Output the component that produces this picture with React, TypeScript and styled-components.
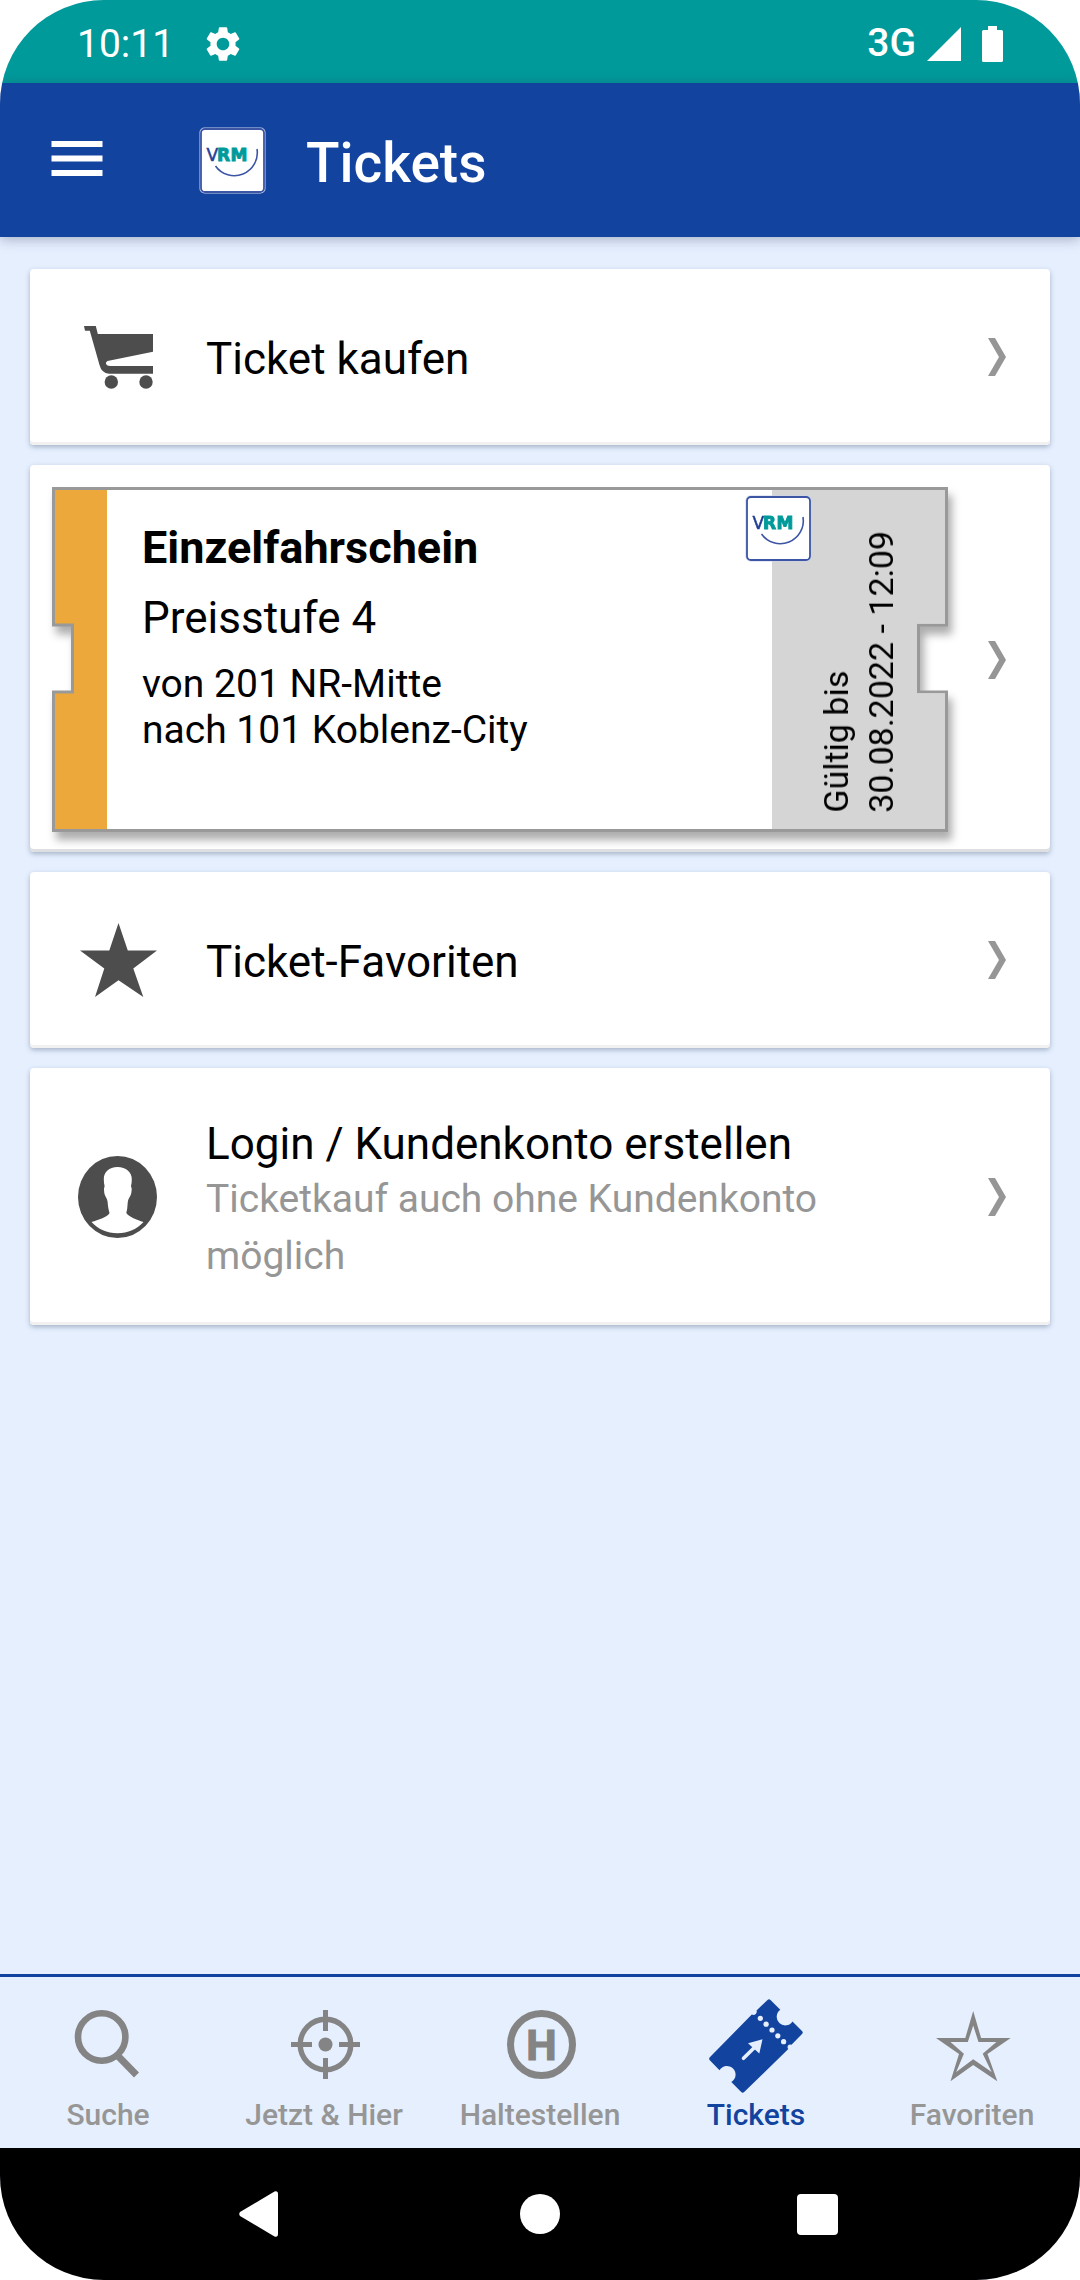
import React from "react";
import styled, { createGlobalStyle } from "styled-components";

const color = {
  teal: "#009a9a",
  blue: "#12449f",
  page: "#e5effe",
  card: "#ffffff",
  ink: "#000000",
  muted: "#969696",
  navIcon: "#848484",
  icon: "#4d4d4d",
  outline: "#999999",
  orange: "#eca83b",
  stub: "#d5d5d5",
};

const GlobalStyle = createGlobalStyle`
  *, *::before, *::after { box-sizing: border-box; }
  body {
    margin: 0;
    background: #ffffff;
    color: ${color.ink};
    font-family: Roboto, "Noto Sans", sans-serif;
  }
  svg { display: block; flex: none; }
`;

const Screen = styled.div`
  display: flex;
  flex-direction: column;
  min-height: 100vh;
  overflow: hidden;
  border-radius: 104px;
  background: ${color.page};
`;

const StatusBar = styled.div`
  display: flex;
  align-items: center;
  justify-content: space-between;
  height: 83px;
  padding: 4px 77px 0 77px;
  background: ${color.teal};
  color: #ffffff;
  font-size: 39px;
  line-height: 46px;
`;

const StatusGroup = styled.div<{ $gap: number }>`
  display: flex;
  align-items: center;
  gap: ${(p) => p.$gap}px;
`;

const Network = styled.span`
  padding-bottom: 2px;
  font-weight: 500;
`;

const SignalIcons = styled.div`
  display: flex;
  align-items: center;
  gap: 21px;
`;

const AppBar = styled.header`
  position: relative;
  display: flex;
  align-items: center;
  height: 154px;
  padding: 0 51px;
  background: ${color.blue};
  color: #ffffff;
  box-shadow: 0 2px 12px rgba(40, 50, 90, 0.35);
`;

const IconButton = styled.button`
  display: flex;
  align-items: center;
  justify-content: center;
  padding: 0;
  border: 0;
  background: none;
  color: inherit;
  cursor: pointer;
`;

const Brand = styled.div`
  display: flex;
  align-items: center;
  gap: 40px;
  margin-left: 96px;
`;

const Title = styled.h1`
  margin: 0;
  padding-top: 6px;
  font-size: 55px;
  font-weight: 500;
  line-height: 64px;
`;

const List = styled.main`
  display: flex;
  flex: 1;
  flex-direction: column;
  gap: 20px;
  padding: 32px 30px;
`;

const Card = styled.a<{ $line: string }>`
  display: flex;
  align-items: center;
  min-height: 176px;
  border-radius: 4px;
  background: ${color.card};
  color: inherit;
  text-decoration: none;
  box-shadow:
    inset 0 -3px 0 ${(p) => p.$line},
    0 2px 5px rgba(70, 90, 120, 0.4);
`;

const ActionCard = styled(Card)`
  padding: 40px 0;
`;

const TicketCard = styled(Card)`
  padding: 22px 0 20px 22px;
`;

const CardIcon = styled.span`
  display: flex;
  flex: none;
  justify-content: center;
  width: 176px;
`;

const CardText = styled.span<{ $twoLevels: boolean }>`
  flex: 1;
  padding-top: ${(p) => (p.$twoLevels ? 9 : 4)}px;
`;

const CardTitle = styled.span`
  display: block;
  font-size: 44px;
  line-height: 54px;
`;

const CardDetail = styled.span`
  display: block;
  color: ${color.muted};
  font-size: 39px;
  line-height: 57px;
`;

const ChevronSlot = styled.span`
  display: flex;
  flex: none;
  justify-content: flex-end;
  width: 102px;
  padding-right: 44px;
`;

const TicketShadow = styled.div`
  flex: 1;
  filter: drop-shadow(4px 8px 4px rgba(0, 0, 0, 0.32));
`;

/* Rectangle with a notch in the middle of both short sides. */
const notched = (left: number, right: number, up: number, down: number) => `
  clip-path: polygon(
    0 0, 100% 0,
    100% calc(50% - ${up}px),
    calc(100% - ${right}px) calc(50% - ${up}px),
    calc(100% - ${right}px) calc(50% + ${down}px),
    100% calc(50% + ${down}px),
    100% 100%, 0 100%,
    0 calc(50% + ${down}px),
    ${left}px calc(50% + ${down}px),
    ${left}px calc(50% - ${up}px),
    0 calc(50% - ${up}px)
  );
`;

const TicketOutline = styled.div`
  padding: 3px;
  background: ${color.outline};
  ${notched(19, 28, 33, 31)}
`;

const TicketBody = styled.div`
  display: flex;
  min-height: 339px;
  background: linear-gradient(to right, ${color.orange} 52px, ${color.card} 52px);
  ${notched(19, 28, 36, 34)}
`;

const TicketInfo = styled.div`
  display: flex;
  flex: 1;
  flex-direction: column;
  gap: 16px;
  padding: 31px 0 31px 87px;
  font-size: 44px;
  line-height: 54px;
`;

const TicketName = styled.strong`
  font-size: 45px;
  font-weight: 700;
`;

const TicketRoute = styled.span`
  font-size: 39px;
  line-height: 46px;
`;

const TicketStub = styled.div`
  position: relative;
  display: flex;
  align-items: flex-end;
  justify-content: flex-end;
  width: 173px;
  padding: 0 41px 16px 0;
  background: ${color.stub};
`;

const StubLogo = styled.span`
  position: absolute;
  top: 5px;
  left: -27px;
`;

const Validity = styled.span`
  writing-mode: vertical-rl;
  transform: rotate(180deg);
  font-size: 34px;
  line-height: 45px;
  white-space: nowrap;
`;

const TabBar = styled.nav`
  display: grid;
  grid-template-columns: repeat(5, 1fr);
  border-top: 3px solid ${color.blue};
  background: ${color.page};
`;

const Tab = styled.a<{ $active?: boolean }>`
  display: flex;
  flex-direction: column;
  align-items: center;
  padding: 22px 0 13px;
  color: ${(p) => (p.$active ? color.blue : color.muted)};
  font-size: 30px;
  font-weight: 500;
  line-height: 40px;
  text-decoration: none;

  svg {
    color: ${(p) => (p.$active ? color.blue : color.navIcon)};
  }
`;

const SystemBar = styled.div`
  display: grid;
  grid-template-columns: repeat(3, 277px);
  justify-content: center;
  height: 132px;
  background: #000000;
  color: #ffffff;
`;

const Logo = () => (
  <svg width="67" height="67" viewBox="0 0 67 67" role="img" aria-label="VRM">
    <rect x="0.5" y="0.5" width="66" height="66" rx="5" fill="#c9d3ea" />
    <rect x="2" y="2" width="63" height="63" rx="4" fill="#fff" stroke="#3c55a5" strokeWidth="1.8" />
    <text x="7.5" y="33.5" fontFamily="DejaVu Sans, sans-serif" fontSize="17" fill="#1f3f96" stroke="#1f3f96" strokeWidth="0.5">
      V
    </text>
    <g fontFamily="DejaVu Sans, sans-serif" fontSize="17" fontWeight="700" fill="#009a9a" stroke="#009a9a" strokeWidth="0.9">
      <text x="18" y="33.5">R</text>
      <text x="31.5" y="33.5">M</text>
    </g>
    <path d="M58 22A23 23 0 0 1 16.5 39" fill="none" stroke="#3c55a5" strokeWidth="1.6" />
  </svg>
);

const Gear = () => (
  <svg width="42" height="42" viewBox="0 0 24 24" fill="currentColor">
    <path d="M19.14 12.94c.04-.3.06-.61.06-.94 0-.32-.02-.64-.07-.94l2.03-1.58a.49.49 0 0 0 .12-.61l-1.92-3.32a.488.488 0 0 0-.59-.22l-2.39.96c-.5-.38-1.03-.7-1.62-.94l-.36-2.54a.484.484 0 0 0-.48-.41h-3.84c-.24 0-.43.17-.47.41l-.36 2.54c-.59.24-1.13.57-1.62.94l-2.39-.96c-.22-.08-.47 0-.59.22L2.74 8.87c-.12.21-.08.47.12.61l2.03 1.58c-.05.3-.09.63-.09.94s.02.64.07.94l-2.03 1.58a.49.49 0 0 0-.12.61l1.92 3.32c.12.22.37.29.59.22l2.39-.96c.5.38 1.03.7 1.62.94l.36 2.54c.05.24.24.41.48.41h3.84c.24 0 .44-.17.47-.41l.36-2.54c.59-.24 1.13-.56 1.62-.94l2.39.96c.22.08.47 0 .59-.22l1.92-3.32c.12-.22.07-.47-.12-.61l-2.01-1.58zM12 15.6c-1.98 0-3.6-1.62-3.6-3.6s1.62-3.6 3.6-3.6 3.6 1.62 3.6 3.6-1.62 3.6-3.6 3.6z" />
  </svg>
);

const Signal = () => (
  <svg width="34" height="36" viewBox="0 0 34 36" fill="currentColor">
    <path d="M34 1V35H0Z" />
  </svg>
);

const Battery = () => (
  <svg width="21" height="36" viewBox="0 0 21 36" fill="currentColor">
    <path d="M6 0h9v4h4.5q1.5 0 1.5 1.5v29q0 1.500-1.500 1.500h-18Q0 36 0 34.500v-29Q0 4 1.500 4H6Z" />
  </svg>
);

const Burger = () => (
  <svg width="52" height="38" viewBox="0 0 52 38" fill="currentColor">
    <path d="M0.500 0h51v6h-51zM0.500 14.500h51v6h-51zM0.500 29h51v6h-51z" />
  </svg>
);

const Chevron = () => (
  <svg width="18" height="38" viewBox="0 0 18 38" fill="#969696">
    <path d="M0 0h7l11 19-11 19H0l11-19z" />
  </svg>
);

const Cart = () => (
  <svg width="69" height="63" viewBox="0 0 69 63" fill={color.icon}>
    <path d="M0 0H11.800L13.800 8H69V25.700L23.500 35Q21.500 36 22 38Q23 40 26 40H69V47.700H25Q17.500 47 15.500 39L5.800 4.700H1Z" />
    <circle cx="27.3" cy="56" r="6.7" />
    <circle cx="62" cy="56" r="6.7" />
  </svg>
);

const StarFilled = () => (
  <svg width="77" height="75" viewBox="0 0 77 75" fill={color.icon}>
    <path d="M38.500 0L47.800 27.500H77L53.300 45.500L63.300 74L38.500 57.200L15 74L24.300 45.500L0 27.500H29.300Z" />
  </svg>
);

const Person = () => (
  <svg width="81" height="82" viewBox="0 0 81 82">
    <ellipse cx="39.5" cy="41" rx="39.5" ry="41" fill={color.icon} />
    <path
      fill="#fff"
      d="M39.500 11C31 11 25.800 16 25.800 23Q25.800 27 26.600 30Q25.300 33 26.300 37C27 41 29.300 42 29.600 46C30 51 30.500 53 31.500 57C30 61 20 64 13.500 66C20 73 29 77.300 39.500 77.300S59 73 65.500 66C59 64 51 61 48.300 57C49.500 53 49.300 51 49.800 46C50.300 42 52.500 41 53.300 37Q54.500 33 53 30Q53.800 27 53.800 23C53.800 16 48 11 39.500 11Z"
    />
  </svg>
);

const TabIcon = ({ children }: { children: React.ReactNode }) => (
  <svg width="96" height="96" viewBox="0 0 96 96" fill="none" stroke="none" aria-hidden="true">
    {children}
  </svg>
);

const SearchIcon = () => (
  <TabIcon>
    <circle cx="41.7" cy="38" r="23.7" stroke="currentColor" strokeWidth="6.6" />
    <path d="M57.500 56.500L76.500 76" stroke="currentColor" strokeWidth="7" />
  </TabIcon>
);

const TargetIcon = () => (
  <TabIcon>
    <circle cx="49.5" cy="45.5" r="25.3" stroke="currentColor" strokeWidth="5.4" />
    <circle cx="49.5" cy="45.5" r="7" fill="currentColor" />
    <path d="M49.500 11V32M49.500 59V80M15 45.500H36M63 45.500H84" stroke="currentColor" strokeWidth="5" />
  </TabIcon>
);

const StopIcon = () => (
  <TabIcon>
    <circle cx="49.5" cy="45.5" r="31" stroke="currentColor" strokeWidth="7" />
    <text
      x="49.5"
      y="61"
      textAnchor="middle"
      fontFamily="Roboto, sans-serif"
      fontSize="43"
      fontWeight="700"
      fill="currentColor"
      stroke="currentColor"
      strokeWidth="1.2"
    >
      H
    </text>
  </TabIcon>
);

const TicketIcon = () => (
  <TabIcon>
    <path
      fill="currentColor"
      d="M59.500 1Q61 -0.500 62.500 1L72.300 10.800A8.600 8.600 0 1 0 84.500 22.500L94 32Q95.500 33.500 94 35L83.500 45.800Q81.500 44.800 80 46.500Q79 48.500 80.300 50L36.200 93Q34.700 94.500 33.200 93L23.300 83A8.600 8.600 0 1 0 11.500 71.300L1.800 61.300Q0.500 59.800 1.800 58.300L43.800 15.500Q46 16.500 47.800 15Q49.300 13 48.500 11.500Z"
    />
    <g fill={color.page}>
      <circle cx="52.3" cy="19.3" r="2.6" />
      <circle cx="58.1" cy="25.2" r="2.6" />
      <circle cx="64" cy="31" r="2.6" />
      <circle cx="69.8" cy="36.8" r="2.6" />
      <circle cx="75.6" cy="42.7" r="2.6" />
      <path d="M54.500 40.300L40 44.300L51.300 54.500Z" />
    </g>
    <path d="M35.500 59.300L48 47" stroke={color.page} strokeWidth="3.6" strokeLinecap="round" />
  </TabIcon>
);

const StarIcon = () => (
  <TabIcon>
    <path
      fill="currentColor"
      fillRule="evenodd"
      d="M49.200 12L57.100 39H86.700L63.500 55L73.300 82.300L49.200 66L26.500 82.300L35 55L12 39H41.300ZM49.200 26.500L43.800 43H26.500L39.900 54.700L32.200 73L49.200 60.300L67.600 73L58.700 54.700L72.400 43H54.500Z"
    />
  </TabIcon>
);

const BackIcon = () => (
  <svg width="48" height="46" viewBox="0 0 48 46" fill="currentColor">
    <path d="M1 21L35.500 0.500Q39 -0.500 39 3V43Q39 46.500 35.500 45.500L1 25Q-0.500 23 1 21Z" />
  </svg>
);

const HomeIcon = () => (
  <svg width="40" height="40" viewBox="0 0 40 40" fill="currentColor">
    <circle cx="20" cy="20" r="20" />
  </svg>
);

const RecentIcon = () => (
  <svg width="41" height="41" viewBox="0 0 41 41" fill="currentColor">
    <rect width="41" height="41" rx="4" />
  </svg>
);

const tabs = [
  { label: "Suche", href: "#suche", Icon: SearchIcon },
  { label: "Jetzt & Hier", href: "#jetzt", Icon: TargetIcon },
  { label: "Haltestellen", href: "#haltestellen", Icon: StopIcon },
  { label: "Tickets", href: "#tickets", Icon: TicketIcon, active: true },
  { label: "Favoriten", href: "#favoriten", Icon: StarIcon },
];

type ActionProps = {
  href: string;
  icon: React.ReactNode;
  title: string;
  detail?: string;
};

const Action = ({ href, icon, title, detail }: ActionProps) => (
  <ActionCard href={href} $line="#f1f1f1">
    <CardIcon>{icon}</CardIcon>
    <CardText $twoLevels={Boolean(detail)}>
      <CardTitle>{title}</CardTitle>
      {detail && <CardDetail>{detail}</CardDetail>}
    </CardText>
    <ChevronSlot>
      <Chevron />
    </ChevronSlot>
  </ActionCard>
);

export default function App() {
  return (
    <>
      <GlobalStyle />
      <Screen>
        <StatusBar>
          <StatusGroup $gap={28}>
            <span>10:11</span>
            <Gear />
          </StatusGroup>
          <StatusGroup $gap={11}>
            <Network>3G</Network>
            <SignalIcons>
              <Signal />
              <Battery />
            </SignalIcons>
          </StatusGroup>
        </StatusBar>

        <AppBar>
          <IconButton type="button" aria-label="Menü">
            <Burger />
          </IconButton>
          <Brand>
            <Logo />
            <Title>Tickets</Title>
          </Brand>
        </AppBar>

        <List>
          <Action href="#kaufen" icon={<Cart />} title="Ticket kaufen" />

          <TicketCard href="#ticket" $line="#dedfe1">
            <TicketShadow>
              <TicketOutline>
                <TicketBody>
                  <TicketInfo>
                    <TicketName>Einzelfahrschein</TicketName>
                    <span>Preisstufe 4</span>
                    <TicketRoute>
                      von 201 NR-Mitte
                      <br />
                      nach 101 Koblenz-City
                    </TicketRoute>
                  </TicketInfo>
                  <TicketStub>
                    <StubLogo>
                      <Logo />
                    </StubLogo>
                    <Validity>
                      Gültig bis
                      <br />
                      30.08.2022 - 12:09
                    </Validity>
                  </TicketStub>
                </TicketBody>
              </TicketOutline>
            </TicketShadow>
            <ChevronSlot>
              <Chevron />
            </ChevronSlot>
          </TicketCard>

          <Action href="#ticket-favoriten" icon={<StarFilled />} title="Ticket-Favoriten" />
          <Action
            href="#login"
            icon={<Person />}
            title="Login / Kundenkonto erstellen"
            detail="Ticketkauf auch ohne Kundenkonto möglich"
          />
        </List>

        <TabBar>
          {tabs.map(({ label, href, Icon, active }) => (
            <Tab key={label} href={href} $active={active} aria-current={active ? "page" : undefined}>
              <Icon />
              {label}
            </Tab>
          ))}
        </TabBar>

        <SystemBar>
          <IconButton type="button" aria-label="Zurück">
            <BackIcon />
          </IconButton>
          <IconButton type="button" aria-label="Startbildschirm">
            <HomeIcon />
          </IconButton>
          <IconButton type="button" aria-label="Letzte Apps">
            <RecentIcon />
          </IconButton>
        </SystemBar>
      </Screen>
    </>
  );
}
